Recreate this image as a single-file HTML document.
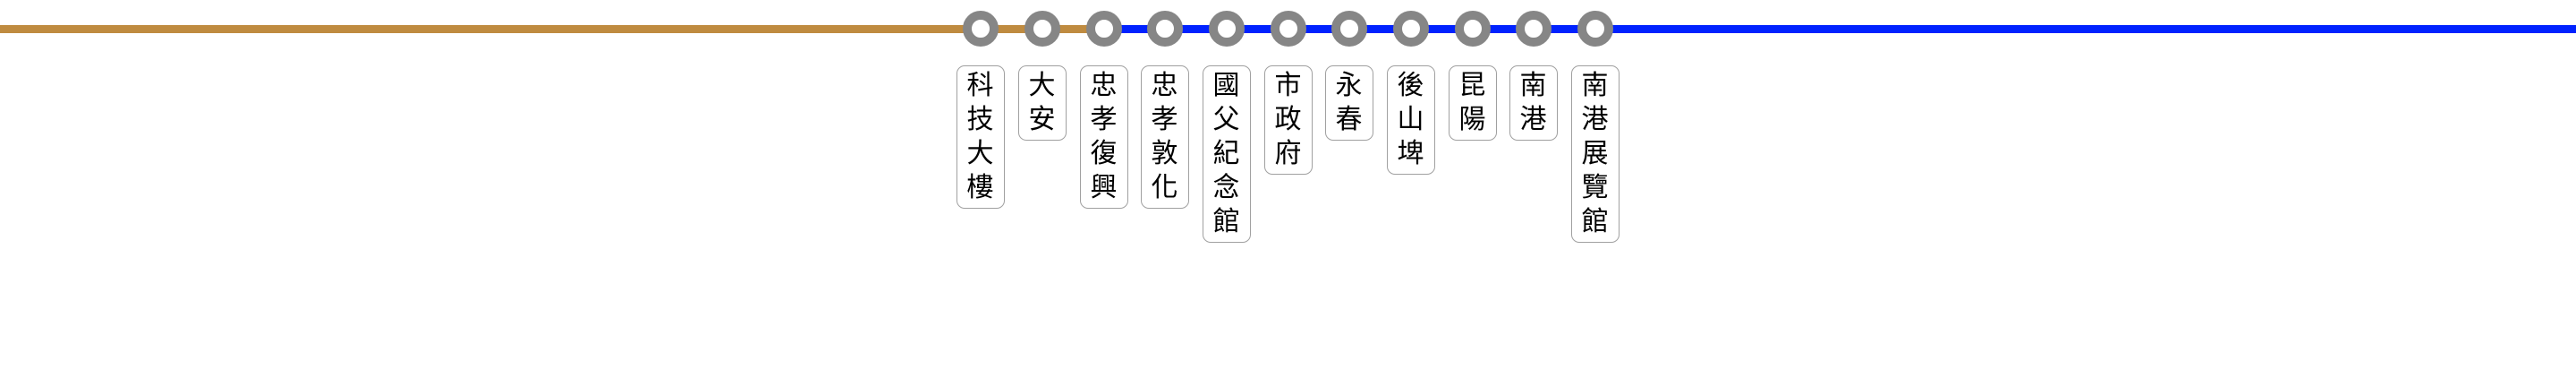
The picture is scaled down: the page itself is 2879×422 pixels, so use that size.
<!DOCTYPE html>
<html><head><meta charset="utf-8"><style>
body{margin:0;width:2879px;height:422px;background:#fff;position:relative;overflow:hidden;font-family:"Liberation Sans","Noto Sans CJK TC",sans-serif;}
.b{position:absolute;top:73px;width:52px;margin-left:-27.5px;border:1.5px solid #a0a0a0;border-radius:9px;background:#fff;text-align:center;font-size:30px;line-height:38px;padding:3px 0;color:#000;}
</style></head><body>
<svg width="2879" height="80" style="position:absolute;left:0;top:0">
<rect x="0" y="28" width="1234" height="9" fill="#bf8b40"/>
<rect x="1234" y="28" width="1645" height="9" fill="#0022ff"/>
<g fill="#fff" stroke="#868686" stroke-width="10">
<circle cx="1096" cy="32" r="15"/><circle cx="1165" cy="32" r="15"/><circle cx="1234" cy="32" r="15"/><circle cx="1302" cy="32" r="15"/><circle cx="1371" cy="32" r="15"/><circle cx="1440" cy="32" r="15"/><circle cx="1508" cy="32" r="15"/><circle cx="1577" cy="32" r="15"/><circle cx="1646" cy="32" r="15"/><circle cx="1714" cy="32" r="15"/><circle cx="1783" cy="32" r="15"/>
</g></svg>
<div class="b" style="left:1096px">科<br>技<br>大<br>樓</div>
<div class="b" style="left:1165px">大<br>安</div>
<div class="b" style="left:1234px">忠<br>孝<br>復<br>興</div>
<div class="b" style="left:1302px">忠<br>孝<br>敦<br>化</div>
<div class="b" style="left:1371px">國<br>父<br>紀<br>念<br>館</div>
<div class="b" style="left:1440px">市<br>政<br>府</div>
<div class="b" style="left:1508px">永<br>春</div>
<div class="b" style="left:1577px">後<br>山<br>埤</div>
<div class="b" style="left:1646px">昆<br>陽</div>
<div class="b" style="left:1714px">南<br>港</div>
<div class="b" style="left:1783px">南<br>港<br>展<br>覽<br>館</div>
</body></html>
